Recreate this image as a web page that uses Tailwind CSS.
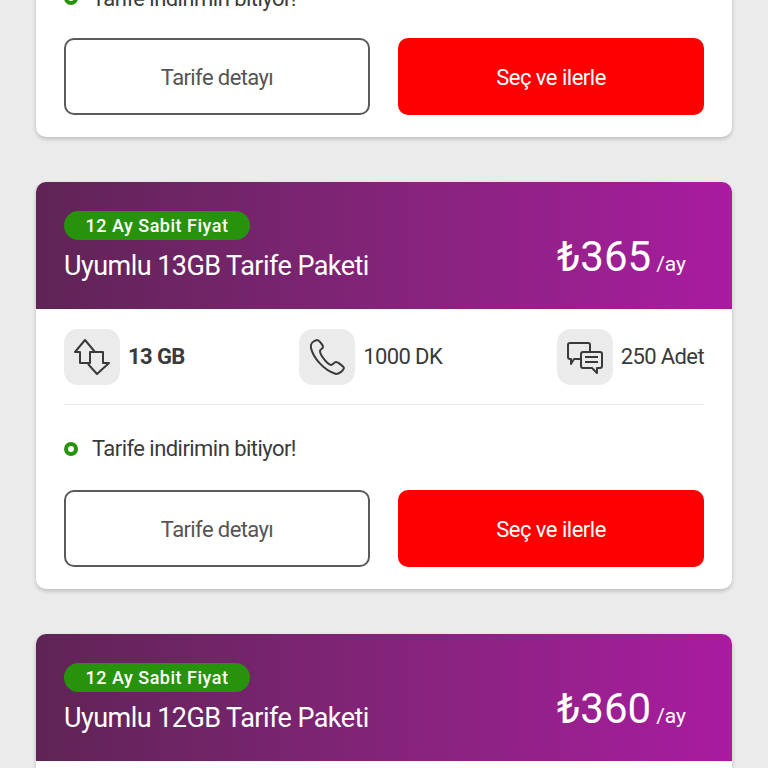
<!DOCTYPE html>
<html lang="tr">

<head>
    <meta charset="UTF-8">
    <meta name="viewport" content="width=device-width, initial-scale=1.0">
    <title>Tarife Paketleri</title>
    <script src="https://cdn.jsdelivr.net/npm/@tailwindcss/browser@4"></script>
</head>

<body class="bg-[#ebebeb] font-['Roboto','Noto_Sans',sans-serif] text-[#3a3a3a]">
    <div class="h-[768px] overflow-hidden px-[36px] flex flex-col gap-[45px]">

        <!-- first card, scrolled past the top -->
        <div class="shrink-0 -mt-[52px] bg-white rounded-b-[10px] shadow-[0_2px_4px_rgba(0,0,0,0.2)] px-[28px]">
            <div class="h-[90px] pt-[10px] flex items-center gap-[14px]">
                <span class="w-[14px] h-[14px] rounded-full border-[4px] border-[#27920b]"></span>
                <span class="text-[22px] tracking-[-0.55px]">Tarife indirimin bitiyor!</span>
            </div>
            <div class="flex justify-between">
                <button class="w-[306px] h-[77px] pt-[2px] rounded-[10px] border-2 border-[#5a5a5a] text-[22px] tracking-[-0.6px] text-[#555]">Tarife detayı</button>
                <button class="w-[306px] h-[77px] pt-[2px] rounded-[10px] bg-[#fe0000] text-white text-[22px] tracking-[-0.5px]">Seç ve ilerle</button>
            </div>
            <div class="h-[22px]"></div>
        </div>

        <!-- 13GB -->
        <div class="shrink-0 bg-white rounded-[10px] shadow-[0_2px_4px_rgba(0,0,0,0.2)] overflow-hidden">
            <div class="h-[127px] bg-gradient-to-r from-[#5f2455] to-[#a91ba0] pl-[28px] pr-[46px] flex items-center justify-between text-white">
                <div class="mt-[11px]">
                    <div class="w-[186px] h-[29px] rounded-full bg-[#27920b] flex items-center justify-center text-[18px] font-medium tracking-[0.5px]">12 Ay Sabit Fiyat</div>
                    <div class="text-[27px] leading-[52px] tracking-[-0.55px]">Uyumlu 13GB Tarife Paketi</div>
                </div>
                <div class="flex items-baseline gap-[5px] mt-[22px]">
                    <span class="text-[42px]">₺365</span>
                    <span class="text-[21px]">/ay</span>
                </div>
            </div>
            <div class="px-[28px]">
                <div class="flex justify-between items-center h-[96px] border-b border-[#ebebeb]">
                    <div class="flex items-center gap-[8px]">
                        <span class="w-[56px] h-[56px] rounded-[14px] bg-[#ebebeb] flex items-center justify-center">
                            <svg width="36" height="36" viewBox="0 0 36 36" fill="none" stroke="#3a3a3a" stroke-width="2" stroke-linejoin="round"><path d="M1 13 L11 1 L21 13 H16 V24 H6 V13 Z"/><path d="M16 13 H29 V24 H35 L23 35 L14 25"/></svg>
                        </span>
                        <span class="text-[22px] font-bold tracking-[-0.6px]">13 GB</span>
                    </div>
                    <div class="flex items-center gap-[8px]">
                        <span class="w-[56px] h-[56px] rounded-[14px] bg-[#ebebeb] flex items-center justify-center">
                            <svg width="36" height="36" viewBox="0 0 36 36" fill="none" stroke="#3a3a3a" stroke-width="2" stroke-linejoin="round"><path d="M8 1 C4 2 1 5 2 9 C4 18 14 31 27 35 C30 35 34 32 35 29 C35 28 29 23 27 23 C25 23 24 26 22 26 C18 25 11 16 11 12 C11 10 14 10 14 8 C14 6 10 1 8 1 Z"/></svg>
                        </span>
                        <span class="text-[22px] tracking-[-0.6px]">1000 DK</span>
                    </div>
                    <div class="flex items-center gap-[8px]">
                        <span class="w-[56px] h-[56px] rounded-[14px] bg-[#ebebeb] flex items-center justify-center">
                            <svg width="36" height="36" viewBox="0 0 36 36" fill="none" stroke="#3a3a3a" stroke-width="2" stroke-linejoin="round"><path d="M13 20 H7 L4 25 V20 H3 Q1 20 1 18 V6 Q1 4 3 4 H21 Q23 4 23 6 V13"/><path d="M16 13 H33 Q35 13 35 15 V27 Q35 29 33 29 H30 V34 L25 29 H16 Q14 29 14 27 V15 Q14 13 16 13 Z"/><path d="M18 18 H31 M18 23 H31"/></svg>
                        </span>
                        <span class="text-[22px] tracking-[-0.6px]">250 Adet</span>
                    </div>
                </div>
                <div class="h-[85px] pt-[2px] flex items-center gap-[14px]">
                    <span class="w-[14px] h-[14px] rounded-full border-[4px] border-[#27920b]"></span>
                    <span class="text-[22px] tracking-[-0.55px]">Tarife indirimin bitiyor!</span>
                </div>
                <div class="flex justify-between">
                    <button class="w-[306px] h-[77px] pt-[2px] rounded-[10px] border-2 border-[#5a5a5a] text-[22px] tracking-[-0.6px] text-[#555]">Tarife detayı</button>
                    <button class="w-[306px] h-[77px] pt-[2px] rounded-[10px] bg-[#fe0000] text-white text-[22px] tracking-[-0.5px]">Seç ve ilerle</button>
                </div>
                <div class="h-[22px]"></div>
            </div>
        </div>

        <!-- 12GB -->
        <div class="shrink-0 bg-white rounded-[10px] shadow-[0_2px_4px_rgba(0,0,0,0.2)] overflow-hidden">
            <div class="h-[127px] bg-gradient-to-r from-[#5f2455] to-[#a91ba0] pl-[28px] pr-[46px] flex items-center justify-between text-white">
                <div class="mt-[11px]">
                    <div class="w-[186px] h-[29px] rounded-full bg-[#27920b] flex items-center justify-center text-[18px] font-medium tracking-[0.5px]">12 Ay Sabit Fiyat</div>
                    <div class="text-[27px] leading-[52px] tracking-[-0.55px]">Uyumlu 12GB Tarife Paketi</div>
                </div>
                <div class="flex items-baseline gap-[5px] mt-[22px]">
                    <span class="text-[42px]">₺360</span>
                    <span class="text-[21px]">/ay</span>
                </div>
            </div>
            <div class="h-[40px]"></div>
        </div>
    </div>
</body>

</html>
